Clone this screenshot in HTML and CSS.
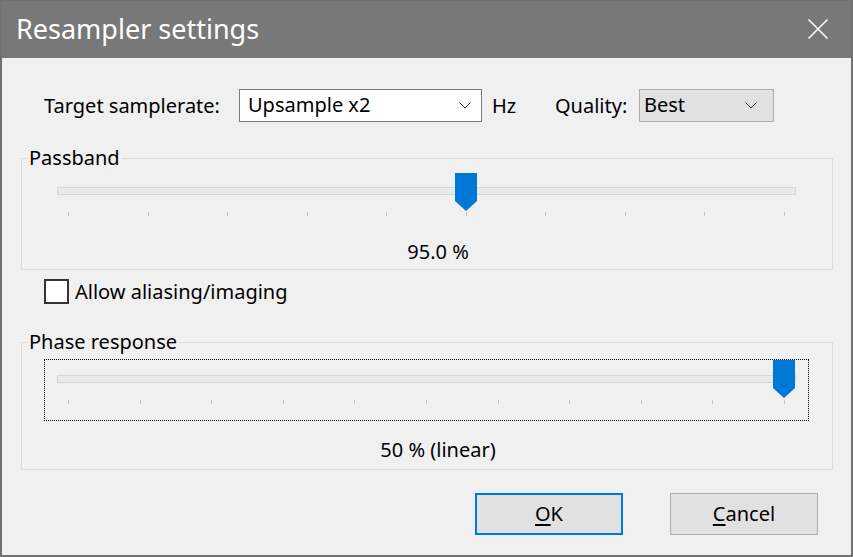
FILE: index.html
```html
<!DOCTYPE html>
<html lang="en">
<head>
  <meta charset="UTF-8" />
  <title>Resampler settings</title>
  <link rel="stylesheet" href="styles.css">
</head>
<body>
  <div class="dialog">
    <div class="titlebar">
      <span class="title">Resampler settings</span>
      <svg class="close" width="20" height="20" viewBox="0 0 20 20">
        <path d="M0.5 0.5 L19.5 19.5 M19.5 0.5 L0.5 19.5" stroke="#fff" stroke-width="1.5" fill="none"/>
      </svg>
    </div>

    <div class="content">
      <!-- Target rate + quality -->
      <div class="top-row">
        <span class="lbl lbl-target">Target samplerate:</span>
        <div class="combo combo-rate">
          <span>Upsample x2</span>
          <svg class="chev" width="12" height="7" viewBox="0 0 12 7"><path d="M0.5 0.5 L6 6 L11.5 0.5" stroke="#333" fill="none"/></svg>
        </div>
        <span class="lbl lbl-hz">Hz</span>
        <span class="lbl lbl-quality">Quality:</span>
        <div class="combo combo-quality">
          <span>Best</span>
          <svg class="chev" width="12" height="7" viewBox="0 0 12 7"><path d="M0.5 0.5 L6 6 L11.5 0.5" stroke="#333" fill="none"/></svg>
        </div>
      </div>

      <fieldset class="group group-passband">
        <legend>Passband</legend>
        <div class="slider-box">
          <div class="slider">
            <div class="track"></div>
            <div class="ticks">
              <i></i><i></i><i></i><i></i><i></i><i></i><i></i><i></i><i></i><i></i>
            </div>
            <svg class="thumb" style="left: 398px" width="22" height="38" viewBox="0 0 22 38"><path d="M0 0 H22 V28 L11 38 L0 28 Z" fill="#0078d7"/></svg>
          </div>
        </div>
        <div class="value">95.0 %</div>
      </fieldset>

      <label class="check">
        <span class="box"></span>
        <span>Allow aliasing/imaging</span>
      </label>

      <fieldset class="group group-phase">
        <legend>Phase response</legend>
        <div class="slider-box focused">
          <div class="slider">
            <div class="track"></div>
            <div class="ticks">
              <i></i><i></i><i></i><i></i><i></i><i></i><i></i><i></i><i></i><i></i><i></i>
            </div>
            <svg class="thumb" style="left: 716px" width="22" height="38" viewBox="0 0 22 38"><path d="M0 0 H22 V28 L11 38 L0 28 Z" fill="#0078d7"/></svg>
          </div>
        </div>
        <div class="value">50 % (linear)</div>
      </fieldset>

      <div class="buttons">
        <button class="btn btn-default"><u>O</u>K</button>
        <button class="btn"><u>C</u>ancel</button>
      </div>
    </div>
  </div>
</body>
</html>
```

FILE: styles.css
```css
html, body {
  margin: 0;
  padding: 0;
  background: #f0f0f0;
}
body {
  font-family: "Noto Sans", "Open Sans", sans-serif;
  font-size: 20px;
  color: #000;
}
.dialog {
  width: 853px;
  height: 557px;
  box-sizing: border-box;
  border: 2px solid #717171;
  border-top-width: 1px;
  background: #f0f0f0;
  overflow: hidden;
}
.titlebar {
  height: 57px;
  background: #787878;
  display: flex;
  align-items: center;
  justify-content: space-between;
  padding: 0 23px 0 14px;
  color: #fff;
}
.title {
  font-size: 27px;
  margin-top: -2px;
}
.close {
  margin-top: -2px;
}
.content {
  padding: 31px 18px 0 19px;
}

/* top row */
.top-row {
  display: flex;
  align-items: center;
  height: 33px;
}
.lbl {
  white-space: nowrap;
}
.lbl-target {
  margin-left: 23px;
  width: 195px;
}
.lbl-hz {
  margin-left: 10px;
  width: 63px;
}
.lbl-quality {
  width: 84px;
}
.combo {
  height: 33px;
  box-sizing: border-box;
  display: flex;
  align-items: center;
  justify-content: space-between;
  padding: 0 10px 2px 8px;
}
.combo-rate {
  width: 243px;
  background: #fff;
  border: 1px solid #7a7a7a;
}
.combo-quality {
  width: 135px;
  background: #e1e1e1;
  border: 1px solid #adadad;
  padding-left: 4px;
  padding-right: 16px;
}
.chev {
  margin-top: 2px;
}

/* group boxes */
.group {
  margin: 0;
  padding: 0 0 5px 0;
  width: 812px;
  box-sizing: border-box;
  border: 1px solid #dcdcdc;
  min-width: 0;
}
.group legend {
  padding: 0 2px;
  margin-left: 5px;
  line-height: 22px;
}
.group-passband {
  margin-top: 25px;
}
.group-passband .slider-box {
  margin-top: 4px;
}
.group-passband .value {
  margin-top: 24px;
}
.group-phase {
  margin-top: 26px;
  padding-bottom: 7px;
}
.group-phase .slider-box {
  margin-top: 6px;
}
.group-phase .value {
  margin-top: 17px;
}

.slider-box {
  margin-left: 22px;
  margin-right: 23px;
  padding: 0 13px;
  box-sizing: border-box;
}
.focused {
  border: 1px dotted #000;
  padding: 0 12px;
  height: 62px;
}
.slider {
  position: relative;
  padding-top: 14px;
}
.focused .slider {
  padding-top: 15px;
}
.track {
  height: 8px;
  box-sizing: border-box;
  background: #e7eaea;
  border: 1px solid #d6d6d6;
}
.ticks {
  display: flex;
  justify-content: space-between;
  padding: 0 11px;
  margin-top: 17px;
  height: 4px;
}
.ticks i {
  width: 1px;
  height: 4px;
  background: #c4c4c4;
}
.thumb {
  position: absolute;
  top: 0;
}
.value {
  text-align: center;
  padding-left: 22px;
  line-height: 24px;
}

/* checkbox */
.check {
  display: flex;
  align-items: center;
  margin: 8px 0 0 23px;
  gap: 6px;
}
.box {
  width: 25px;
  height: 25px;
  box-sizing: border-box;
  border: 2px solid #333;
  background: #fff;
}

/* dialog buttons */
.buttons {
  display: flex;
  justify-content: flex-end;
  gap: 47px;
  margin-top: 23px;
  padding-right: 15px;
}
.btn {
  width: 148px;
  height: 42px;
  box-sizing: border-box;
  background: #e1e1e1;
  border: 1px solid #adadad;
  font-family: inherit;
  font-size: 20px;
  color: #000;
  padding: 0 0 2px 0;
}
.btn u {
  text-underline-offset: 3px;
}
.btn-default {
  border: 2px solid #0078d7;
}
```
